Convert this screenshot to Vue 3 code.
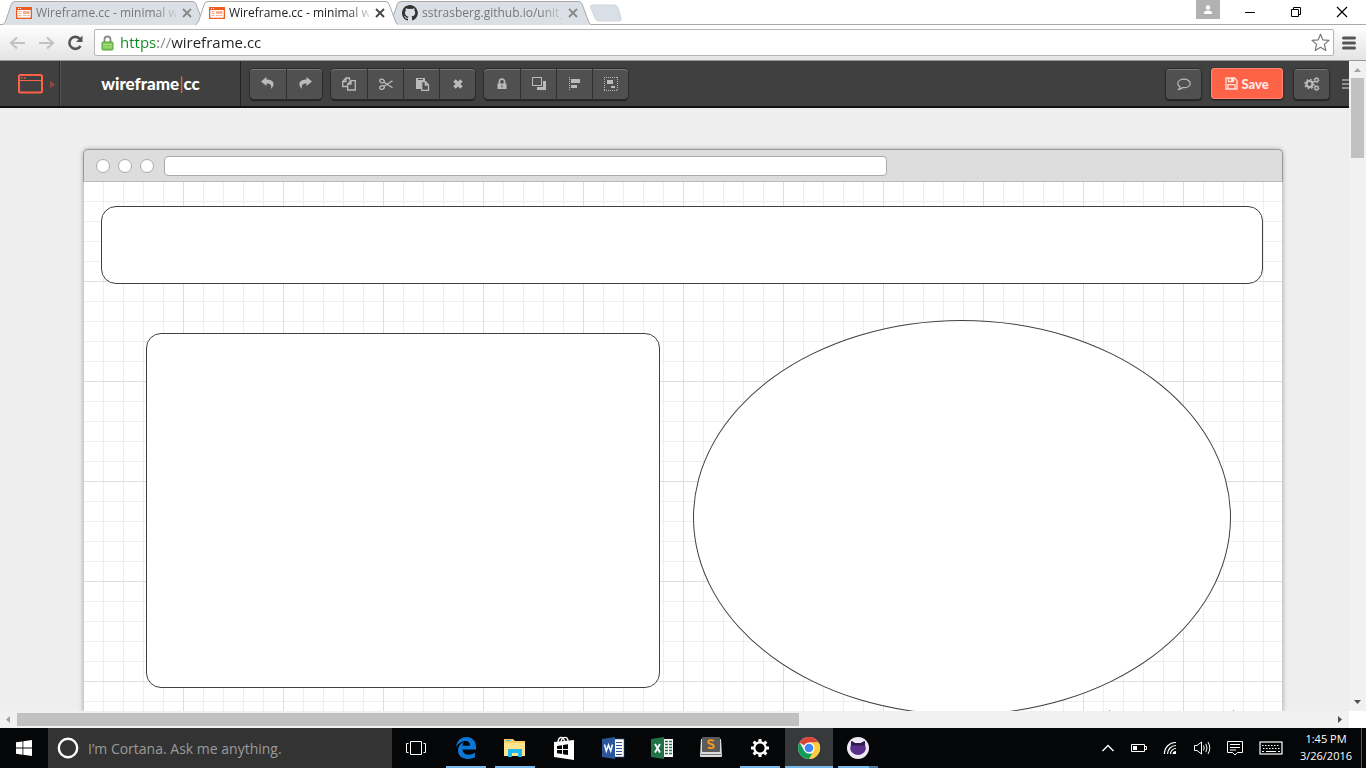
<script setup>
import { ref } from 'vue'

const url = ref('https://wireframe.cc')
const query = ref('')
const activeTab = ref(1)
const tabs = [
  { title: 'Wireframe.cc - minimal wi', icon: 'wire' },
  { title: 'Wireframe.cc - minimal wi', icon: 'wire' },
  { title: 'sstrasberg.github.io/unit_', icon: 'github' }
]
const toolGroups = [
  ['Undo', 'Redo'],
  ['Copy', 'Cut', 'Paste', 'Delete'],
  ['Lock', 'Order', 'Align', 'Group']
]
const apps = [
  { name: 'Edge', state: 'open' },
  { name: 'Explorer', state: 'open' },
  { name: 'Store', state: '' },
  { name: 'Word', state: '' },
  { name: 'Excel', state: '' },
  { name: 'Sublime', state: '' },
  { name: 'Settings', state: 'open' },
  { name: 'Chrome', state: 'open current' },
  { name: 'GitHub', state: 'open several' }
]
</script>

<template>
  <div class="desktop">
    <header class="chrome">
      <div class="strip">
        <div v-for="(t, i) in tabs" :key="i" class="tab" :class="{ active: i === activeTab }">
          <svg class="tab-shape" viewBox="0 0 203 25" preserveAspectRatio="none" aria-hidden="true">
            <path class="tab-fill" d="M0 25C2 24 3 23 4 20L9 5Q10 1 13 1H190Q193 1 194 4L200 20Q201 24 203 25Z" />
            <path class="tab-line" d="M0 24.5C2 24 3 23 4 20L9 5Q10 1.500 13 1.500H190Q193 1.500 194 4L200 20Q201 24 203 24.500" />
          </svg>
          <svg v-if="t.icon === 'wire'" class="favicon" viewBox="0 0 16 16" aria-hidden="true">
            <path fill="#f0591f" d="M0 2h16v12H0zM1.500 5v7.500h13V5z" fill-rule="evenodd" />
            <path fill="#fff" d="M1.500 5h13v7.500h-13zM2 3h1v1H2zM4 3h1v1H4z" />
            <path fill="#f9b08e" d="M2.500 6h3v1h-3zM2.500 8h3v1h-3zM2.500 10h3v1h-3zM7 6h6.500v3H7zM7 10h3v1H7zM11 10h2.500v1H11z" />
          </svg>
          <svg v-else class="favicon" viewBox="0 0 16 16" aria-hidden="true">
            <path fill="#333" d="M8 0C3.600 0 0 3.600 0 8c0 3.500 2.300 6.500 5.500 7.600.4.100.5-.2.500-.4v-1.500c-2.200.5-2.700-.9-2.700-.9-.4-1-.9-1.200-.9-1.200-.7-.5.100-.5.100-.5.800.1 1.200.8 1.200.8.700 1.200 1.900.9 2.400.7.100-.5.300-.9.500-1.100-1.800-.2-3.600-.9-3.600-4 0-.9.300-1.600.8-2.100-.1-.2-.4-1 .1-2.100 0 0 .7-.2 2.200.8a7.500 7.500 0 0 1 4 0c1.500-1 2.200-.8 2.200-.8.400 1.100.200 1.900.100 2.100.5.600.8 1.300.8 2.100 0 3.100-1.900 3.700-3.700 3.900.3.300.6.800.6 1.500v2.200c0 .2.100.5.500.4A8 8 0 0 0 8 0z" />
          </svg>
          <button class="tab-title" @click="activeTab = i">{{ t.title }}</button>
          <button class="tab-close" aria-label="Close tab">
            <svg width="10" height="10" viewBox="0 0 10 10"><path d="M1 1l8 8M9 1L1 9" stroke="currentColor" stroke-width="1.800" /></svg>
          </button>
        </div>
        <button class="new-tab" aria-label="New tab">
          <svg width="34" height="18" viewBox="0 0 34 18"><path d="M3 1H25Q28 1 29 4L32 14Q33 17 30 17H10Q7 17 6 14L2 4Q1 1 3 1Z" fill="#d9dfe6" stroke="#d0d4d9" /></svg>
        </button>
        <div class="window-controls">
          <button class="user" aria-label="User">
            <svg width="10" height="10" viewBox="0 0 10 10"><circle cx="5" cy="2.500" r="2.200" fill="#fff" /><path d="M1 9V8Q1 5.500 5 5.500T9 8V9Z" fill="#fff" /></svg>
          </button>
          <button class="control" aria-label="Minimise"><svg width="12" height="12" viewBox="0 0 12 12"><path d="M1 6.500H11" stroke="#000" /></svg></button>
          <button class="control" aria-label="Restore"><svg width="12" height="12" viewBox="0 0 12 12"><path d="M3.500 3V1.500H10.500V8.500H9M1.500 3.500H8.500V10.500H1.500Z" fill="none" stroke="#000" /></svg></button>
          <button class="control" aria-label="Close"><svg width="12" height="12" viewBox="0 0 12 12"><path d="M1 1L11 11M11 1L1 11" stroke="#000" stroke-width="1.200" /></svg></button>
        </div>
      </div>
      <div class="toolbar">
        <button class="nav" aria-label="Back"><svg width="17" height="14" viewBox="0 0 17 14"><path d="M8 1.500L2 7L8 12.500M2 7H16" fill="none" stroke="#c2c2c2" stroke-width="2.200" /></svg></button>
        <button class="nav" aria-label="Forward"><svg width="17" height="14" viewBox="0 0 17 14"><path d="M9 1.500L15 7L9 12.500M15 7H1" fill="none" stroke="#c2c2c2" stroke-width="2.200" /></svg></button>
        <button class="nav" aria-label="Reload"><svg width="17" height="16" viewBox="0 0 17 16"><path d="M13.500 11A6 6 0 1 1 13 4" fill="none" stroke="#555" stroke-width="2.600" /><path d="M15.500 0.500V7H9Z" fill="#555" /></svg></button>
        <div class="omnibox">
          <svg class="padlock" width="13" height="16" viewBox="0 0 13 16" aria-hidden="true"><path d="M3.500 7V4.500a3 3 0 0 1 6 0V7" fill="none" stroke="#8b8b8b" stroke-width="1.800" /><rect x="1" y="7" width="11" height="8" rx="1" fill="#83cc5b" stroke="#56a039" /><path d="M2 9.500h9M2 12h9" stroke="#a5e182" /></svg>
          <input v-model="url" class="url" type="text" aria-label="Address" spellcheck="false" />
          <button class="star" aria-label="Bookmark"><svg width="19" height="19" viewBox="0 0 19 19"><path d="M9.500 1.200L11.900 6.900L18 7.400L13.400 11.400L14.800 17.400L9.500 14.200L4.200 17.400L5.600 11.400L1 7.400L7.100 6.900Z" fill="#fff" stroke="#777" stroke-width="1.200" stroke-linejoin="round" /></svg></button>
        </div>
        <button class="menu" aria-label="Menu"><svg width="14" height="14" viewBox="0 0 14 14"><path d="M1.500 2H12.500M1.500 7H12.500M1.500 12H12.500" stroke="#555" stroke-width="3" stroke-linecap="round" /></svg></button>
      </div>
    </header>

    <div class="viewport">
      <main class="page">
        <div class="app-bar">
          <button class="device" aria-label="Choose device">
            <svg width="38" height="20" viewBox="0 0 38 20"><rect x="1" y="1" width="23" height="17.500" rx="1.500" fill="none" stroke="#ff6347" stroke-width="2" /><path d="M2 6.500H23" stroke="#ff6347" /><path d="M3 4h2M6 4h2" stroke="#ff6347" /><path d="M32 6.500L37 10.500L32 14.500Z" fill="#8b493e" /></svg>
          </button>
          <a class="brand" href="#">wireframe<span class="bar">|</span>cc</a>
          <div v-for="(g, gi) in toolGroups" :key="gi" class="group">
            <button v-for="name in g" :key="name" class="tool" :aria-label="name">
              <svg width="16" height="16" viewBox="0 0 16 16" fill="none" stroke="#bbb">
                <path v-if="name === 'Undo'" d="M6.500 1L1 5.500L6.500 10V7.500C10 7.500 11.800 8.500 11 13C16 8.500 13.500 3.500 6.500 3.500Z" fill="#bbb" stroke="none" />
                <path v-else-if="name === 'Redo'" d="M9.500 1L15 5.500L9.500 10V7.500C6 7.500 4.200 8.500 5 13C0 8.500 2.500 3.500 9.500 3.500Z" fill="#bbb" stroke="none" />
                <g v-else-if="name === 'Copy'" stroke-width="1.300"><path d="M6.500 10.500H1.700V5.500L5 2H8.500V4.500M5 2V5.500H1.700" /><path d="M10 4.700H14.300V14H6.700V8L10 4.700ZM10 4.700V8H6.700" /></g>
                <g v-else-if="name === 'Cut'" stroke-width="1.300"><ellipse cx="4" cy="5" rx="2.400" ry="1.700" transform="rotate(25 4 5)" /><ellipse cx="4" cy="11.500" rx="2.400" ry="1.700" transform="rotate(-25 4 11.500)" /><path d="M6 6.200L14.500 11.800M6 10.300L14.500 4.700" /></g>
                <g v-else-if="name === 'Paste'"><path d="M2 2H11V5H7V13H2Z" fill="#bbb" stroke="none" /><path d="M4 3.500H9" stroke="#505050" /><path d="M7.700 5.700H11.500L14.500 8.700V14.300H7.700ZM11.300 6V9H14.300" stroke-width="1.300" /></g>
                <path v-else-if="name === 'Delete'" d="M4.500 4.500L11.500 11.500M11.500 4.500L4.500 11.500" stroke-width="3.400" />
                <g v-else-if="name === 'Lock'"><path d="M5.500 8V5.500a2.500 2.500 0 0 1 5 0V8" stroke-width="1.700" /><path d="M3.500 7.500H12.500V13H3.500Z" fill="#bbb" stroke="none" /><path d="M8 9V11.500" stroke="#505050" /></g>
                <g v-else-if="name === 'Order'"><rect x="1.500" y="1.500" width="9" height="8" /><path d="M12 5H15V14H6V11H12Z" fill="#bbb" stroke="none" /></g>
                <g v-else-if="name === 'Align'"><path d="M2.500 1V15" stroke-dasharray="1 1" /><path d="M4 3H13V7H4ZM4 9H10V12H4Z" fill="#bbb" stroke="none" /></g>
                <g v-else><path d="M1 1.500H15M1 14.500H15M1.500 1V15M14.500 1V15" stroke-dasharray="1 1" /><path d="M4 4H10V8H4ZM8 10H12V12H8Z" fill="#bbb" stroke="none" /></g>
              </svg>
            </button>
          </div>
          <div class="actions">
            <button class="single" aria-label="Comments"><svg width="16" height="16" viewBox="0 0 16 16"><path d="M8 3.200c3.500 0 6.200 1.800 6.200 4.200S11.500 11.600 8 11.600l-1.300-.1Q5 13.300 2.700 13.500Q4 12.200 4 10.700Q1.800 9.500 1.800 7.400C1.800 5 4.500 3.200 8 3.200Z" fill="none" stroke="#bbb" stroke-width="1.200" /></svg></button>
            <button class="save"><svg width="13" height="13" viewBox="0 0 13 13" aria-hidden="true"><path d="M1 1H9.500L12 3.500V12H1ZM3 12V7.700H10V12M3.500 1V4.700H8.500V1" fill="none" stroke="#ffe4df" stroke-width="1.300" /><path d="M6 1H8V4H6Z" fill="#ffe4df" /></svg>Save</button>
            <button class="single" aria-label="Settings"><svg width="16" height="16" viewBox="0 0 16 16" fill="none" stroke="#bbb"><circle cx="5.500" cy="8" r="3" stroke-width="2.200" /><circle cx="5.500" cy="8" r="4.600" stroke-width="1.400" stroke-dasharray="1.800 1.800" /><circle cx="12.500" cy="4" r="1.700" stroke-width="1.300" /><circle cx="12.500" cy="4" r="2.600" stroke-dasharray="1 1" /><circle cx="12.500" cy="12" r="1.700" stroke-width="1.300" /><circle cx="12.500" cy="12" r="2.600" stroke-dasharray="1 1" /></svg></button>
            <button class="more" aria-label="More"><svg width="14" height="12" viewBox="0 0 14 12"><path d="M0 2H14M0 6H14M0 10H14" stroke="#aaa" stroke-width="1.500" /></svg></button>
          </div>
        </div>

        <div class="stage">
          <div class="mock">
            <div class="mock-bar">
              <i class="dot"></i><i class="dot"></i><i class="dot"></i>
              <div class="mock-url"></div>
            </div>
            <div class="grid">
              <div class="shape banner"></div>
              <div class="shape card"></div>
              <div class="shape oval"></div>
              <i class="tick first"></i>
              <i class="tick second"></i>
            </div>
          </div>
        </div>
      </main>
      <div class="scroll vertical">
        <svg width="17" height="17" viewBox="0 0 17 17"><path d="M5 11L8.500 7L12 11Z" fill="#a3a3a3" /></svg>
        <div class="track"><div class="thumb"></div></div>
        <svg width="17" height="17" viewBox="0 0 17 17"><path d="M5 6L8.500 10L12 6Z" fill="#505050" /></svg>
      </div>
      <div class="scroll horizontal">
        <svg width="17" height="17" viewBox="0 0 17 17"><path d="M10 5L6 8.500L10 12Z" fill="#a3a3a3" /></svg>
        <div class="track"><div class="thumb"></div></div>
        <svg width="17" height="17" viewBox="0 0 17 17"><path d="M6 5L10 8.500L6 12Z" fill="#505050" /></svg>
      </div>
    </div>

    <footer class="taskbar">
      <button class="start" aria-label="Start"><svg width="16" height="16" viewBox="0 0 16 16"><path d="M0 2.300L6.500 1.400V7.600H0ZM7.300 1.300L16 0V7.600H7.300ZM0 8.400H6.500V14.700L0 13.800ZM7.300 8.400H16V16L7.300 14.800Z" fill="#fff" /></svg></button>
      <div class="cortana">
        <svg width="22" height="22" viewBox="0 0 22 22" aria-hidden="true"><circle cx="11" cy="11" r="9.200" fill="none" stroke="#fff" stroke-width="2.400" /></svg>
        <input v-model="query" type="text" aria-label="Search" placeholder="I’m Cortana. Ask me anything." />
      </div>
      <button class="task-view" aria-label="Task view"><svg width="22" height="16" viewBox="0 0 22 16"><path d="M5.500 1.500H16.500V14.500H5.500ZM3.500 3.500H1.500V12.500H3.500M18.500 3.500H20.500V12.500H18.500" fill="none" stroke="#fff" /></svg></button>
      <button v-for="a in apps" :key="a.name" class="app" :class="a.state" :aria-label="a.name">
        <svg width="24" height="24" viewBox="0 0 24 24">
          <path v-if="a.name === 'Edge'" d="M2 11C3 4.500 7 1 12.500 1C18.500 1 22 5.500 22 10.500V13.500H8.500C8.700 17 11.500 18.700 14.500 18.700C17 18.700 19 18 21 16.800V21.300C19 22.500 16.500 23 14 23C7.500 23 4 19 4 14.500C4 10.500 6.500 7.500 10 6C8.900 7.300 8.600 8.500 8.500 9.800H16C16 7 14.500 5 11.500 5C7.500 5 4.200 7.500 2 11Z" fill="#0a78d7" />
          <g v-else-if="a.name === 'Explorer'"><path d="M1 3H10L12 5H22V20H1Z" fill="#f7cf62" /><path d="M1 7H22V20H1Z" fill="#ffe48e" /><path d="M3 4H8V5H3Z" fill="#35bff0" /><path d="M5 21V13H19V21H15V17H9V21Z" fill="#22b8ed" /></g>
          <g v-else-if="a.name === 'Store'"><path d="M6 7C6 1 11 -1 12.500 5M9 6C10 0 16 0 16 5" fill="none" stroke="#fff" stroke-width="1.400" /><path d="M2 6L22 4V24L2 21Z" fill="#fff" /><path d="M5 10L10 9.200V13H5ZM11 9L16 8.200V13H11ZM5 14H10V18L5 17.200ZM11 14H16V19L11 18.200Z" fill="#050505" /></g>
          <g v-else-if="a.name === 'Word'"><path d="M11 3H23V21H11Z" fill="#fff" stroke="#2b579a" stroke-width=".6" /><path d="M15 6.500H21M15 9.500H21M15 12.500H21M15 15.500H21M15 18.500H21" stroke="#2b579a" /><path d="M1 3L14 1V23L1 21Z" fill="#2b579a" /><path d="M3.500 8.500L5.300 15L7.500 9L9.700 15L11.500 8.500" fill="none" stroke="#fff" stroke-width="1.500" /></g>
          <g v-else-if="a.name === 'Excel'"><path d="M11 3H23V21H11Z" fill="#fff" /><path d="M15 5.500H22M15 8.500H22M15 11.500H22M15 14.500H22M15 17.500H22" stroke="#217346" stroke-width="1.700" /><path d="M18.500 4V20" stroke="#fff" /><path d="M1 3L14 1V23L1 21Z" fill="#217346" /><path d="M5 8L10 16.500M10 8L5 16.500" stroke="#fff" stroke-width="1.800" /></g>
          <g v-else-if="a.name === 'Sublime'"><path d="M2 3L1 20Q1 21 2 21H22Q23 21 23 20L22 3Z" fill="#dcdcdc" /><rect x="3" y="1" width="18" height="15" rx="1" fill="#5b5b5b" /><path d="M2 18.500H22" stroke="#777" /><path d="M15 5C12 3.500 9.200 4 9.200 6C9.200 8.500 14.800 7.500 14.800 10.200C14.800 12.500 11.500 12.500 9 11.500" fill="none" stroke="#f8981d" stroke-width="1.900" /></g>
          <g v-else-if="a.name === 'Settings'" fill="none" stroke="#fff"><circle cx="12" cy="12" r="5.700" stroke-width="2.200" /><path d="M12 3V6M12 18V21M3 12H6M18 12H21M5.600 5.600L7.800 7.800M16.200 16.200L18.400 18.400M18.400 5.600L16.200 7.800M7.800 16.200L5.600 18.400" stroke-width="3" /></g>
          <g v-else-if="a.name === 'Chrome'"><circle cx="12" cy="12" r="11" fill="#e7e7e7" /><path d="M12 12L2.500 6.500A11 11 0 0 1 21.500 6.500H12Z" fill="#db4437" /><path d="M12 6.500H21.600A11 11 0 0 1 12 23L16.800 14.800Z" fill="#ffcd40" /><path d="M2.500 6.500L7.200 14.800L12 17.500H15.200L12 23A11 11 0 0 1 2.500 6.500Z" fill="#0f9d58" /><circle cx="12" cy="12" r="5.500" fill="#fff" /><circle cx="12" cy="12" r="4.300" fill="#4285f4" /></g>
          <g v-else><circle cx="12" cy="12" r="11" fill="#eeeaf5" /><path d="M5.500 5L9 7H15L18.500 5Q19.500 7 19 9Q21 13 18 16.500Q15 19 12 19T6 16.500Q3 13 5 9Q4.500 7 5.500 5Z" fill="#5a2f8c" /><path d="M5.500 5L9 7H15L18.500 5Q19.500 7 19 9.500H5Q4.500 7 5.500 5Z" fill="#2d1d4c" /></g>
        </svg>
      </button>
      <div class="tray">
        <button aria-label="Show hidden icons"><svg width="14" height="10" viewBox="0 0 14 10"><path d="M1.500 8L7 2.500L12.500 8" fill="none" stroke="#fff" stroke-width="1.400" /></svg></button>
        <button aria-label="Battery"><svg width="16" height="10" viewBox="0 0 16 10"><path d="M.5 1.500H13.500V8.500H.5ZM14 3.500H15.500V6.500H14" fill="none" stroke="#fff" /><path d="M2 3H6V7H2Z" fill="#fff" /></svg></button>
        <button aria-label="Network"><svg width="14" height="14" viewBox="0 0 14 14"><path d="M1.500 13A11 11 0 0 1 13 1.500M4.500 13A8.500 8.500 0 0 1 13 4.500M7.500 13A5.500 5.500 0 0 1 13 7.500" fill="none" stroke="#fff" stroke-width="1.200" /><path d="M9.500 13A3.500 3.500 0 0 1 13 10V13Z" fill="#fff" /></svg></button>
        <button aria-label="Volume"><svg width="18" height="16" viewBox="0 0 18 16"><path d="M1.500 5.500H4L8.500 2V14L4 10.500H1.500ZM10.500 5.500Q12 8 10.500 10.500M12.800 3.800Q15.200 8 12.800 12.200M15 2Q18.500 8 15 14" fill="none" stroke="#fff" /></svg></button>
        <button aria-label="Notifications"><svg width="16" height="16" viewBox="0 0 16 16"><path d="M.5 1.500H15.500V12.500H10.500L8 15L5.500 12.500H.5ZM3 4.500H13M3 7.500H13M3 10H9" fill="none" stroke="#fff" /></svg></button>
        <button aria-label="Touch keyboard"><svg width="24" height="14" viewBox="0 0 24 14"><rect x="1" y="1" width="22" height="12" fill="none" stroke="#fff" stroke-width="1.200" /><path d="M3 4.500H21M4 7.500H21" stroke="#fff" stroke-width="1.200" stroke-dasharray="1.500 1.500" /><path d="M3 10.500H5M7 10.500H17M19 10.500H21" stroke="#fff" /></svg></button>
        <div class="clock"><time>1:45 PM</time><time>3/26/2016</time></div>
      </div>
    </footer>
  </div>
</template>

<style>
html, body { margin: 0; overflow: hidden; }
</style>

<style scoped>
* { box-sizing: border-box; }
button { border: 0; padding: 0; background: none; font: inherit; color: inherit; display: flex; align-items: center; justify-content: center; }
svg { display: block; flex: none; }
.desktop { height: 100vh; display: flex; flex-direction: column; font-family: "Open Sans", "Noto Sans", sans-serif; font-size: 12px; color: #222; background: #fff; }
.chrome { flex: none; }
.strip { display: flex; height: 25px; padding-left: 2px; background: linear-gradient(#fff 24px, #a9a9a9 24px); }
.tab { position: relative; display: flex; align-items: center; width: 203px; height: 25px; margin-right: -10px; padding-left: 14px; color: #777; }
.tab.active { z-index: 1; color: #222; }
.tab-shape { position: absolute; inset: 0; width: 100%; height: 100%; }
.tab-fill { fill: #dbe0e7; }
.tab-line { fill: none; stroke: #a9a9a9; }
.tab.active .tab-fill { fill: #fff; }
.favicon { position: relative; width: 16px; height: 16px; margin-right: 4px; }
.tab-title { position: relative; display: block; width: 140px; overflow: hidden; white-space: nowrap; text-align: left; line-height: 20px; -webkit-mask-image: linear-gradient(90deg, #000 118px, transparent 144px); mask-image: linear-gradient(90deg, #000 118px, transparent 144px); }
.tab-close { position: relative; margin-left: 6px; color: #888; }
.active .tab-close { color: #444; }
.new-tab { margin-left: 8px; width: 34px; height: 25px; }
.window-controls { display: flex; margin-left: auto; height: 24px; }
.user { width: 24px; height: 19px; background: #b1b1b1; margin-right: 7px; }
.control { width: 46px; height: 24px; }
.control:last-child { margin-right: 1px; }
.toolbar { display: flex; align-items: center; height: 36px; padding: 0 10px 0 9px; background: linear-gradient(#fff, #e4e4e4); border-bottom: 1px solid #999; }
.nav { width: 17px; height: 24px; margin-right: 12px; }
.nav + .nav + .nav { margin-right: 10px; }
.omnibox { flex: 1; display: flex; align-items: center; height: 27px; padding: 0 3px 0 6px; background: #fff; border: 1px solid #b5b5b5; border-radius: 2px; }
.url { flex: 1; min-width: 0; height: 22px; padding: 0 0 1px; margin-left: 6px; border: 0; outline: 0; font: 15px "Open Sans", "Noto Sans", sans-serif; color: #222; background: linear-gradient(90deg, #0b8a1e 38px, #888 38px, #888 52px, #222 52px); -webkit-background-clip: text; background-clip: text; -webkit-text-fill-color: transparent; }
.menu { width: 14px; margin-left: 8px; }
.viewport { flex: 1; min-height: 0; display: grid; grid-template: minmax(0, 1fr) 17px / minmax(0, 1fr) 17px; }
.page { display: flex; flex-direction: column; overflow: hidden; background: #eee; }
.app-bar { flex: none; display: flex; align-items: center; height: 47px; padding-bottom: 2px; overflow: hidden; background: linear-gradient(#404040 45px, #111 45px); }
.device { align-self: stretch; width: 60px; padding-left: 18px; border-right: 1px solid #262626; justify-content: flex-start; }
.brand { align-self: stretch; width: 181px; border-left: 1px solid #555; border-right: 1px solid #222; display: flex; align-items: center; justify-content: center; color: #fff; text-decoration: none; font: 900 17px Lato, sans-serif; }
.bar { color: #ff6347; font-weight: 400; }
.group { display: flex; height: 30px; margin-left: 9px; border-radius: 4px; background: #505050; box-shadow: inset 0 1px #777, 0 0 0 1px #2b2b2b, 0 2px 1px #222; }
.tool { width: 36px; }
.tool + .tool { border-left: 1px solid #303030; }
.actions { display: flex; align-items: center; margin-left: auto; margin-right: -7px; }
.single { width: 37px; height: 32px; border: 1px solid #2b2b2b; border-radius: 4px; background: #505050; box-shadow: inset 0 1px #777, 0 1px 1px #222; }
.save { width: 72px; height: 31px; margin: 0 10px 0 9px; gap: 3px; border-radius: 4px; background: #ff6347; color: #ffe9e5; font: 900 13px Lato, sans-serif; box-shadow: inset 0 0 0 1px #ff8672, 0 1px 2px #111; }
.more { width: 14px; margin-left: 12px; }
.stage { flex: 1; min-height: 0; display: flex; padding: 41px 66px 0 83px; }
.mock { flex: 1; min-width: 0; display: flex; flex-direction: column; border-radius: 5px 5px 0 0; box-shadow: 0 0 4px rgba(0, 0, 0, .3); }
.mock-bar { flex: none; display: flex; align-items: center; height: 33px; padding-left: 12px; background: #ddd; border: 1px solid #999; border-bottom-color: #bbb; border-radius: 5px 5px 0 0; }
.dot { width: 14px; height: 14px; margin-right: 8px; border: 1px solid #aaa; border-radius: 50%; background: #fff; }
.mock-url { width: 61%; height: 20px; margin-left: 2px; border: 1px solid #aaa; border-radius: 4px; background: #fff; }
.grid { position: relative; flex: 1; overflow: hidden; border-left: 1px solid #ccc; border-right: 1px solid #ccc; background-color: #fff; background-image: linear-gradient(90deg, #dedede 1px, transparent 1px), linear-gradient(#dedede 1px, transparent 1px), linear-gradient(90deg, #eee 1px, transparent 1px), linear-gradient(#eee 1px, transparent 1px); background-size: 100px 100px, 100px 100px, 20px 20px, 20px 20px; background-position: -1px -1px; }
.shape { position: absolute; background: #fff; border: 1px solid #404040; }
.banner { left: 17px; top: 24px; width: 1162px; height: 78px; border-radius: 15px; }
.card { left: 62px; top: 151px; width: 514px; height: 355px; border-radius: 15px; }
.oval { left: 609px; top: 138px; width: 538px; height: 395px; border-radius: 50%; }
.tick { position: absolute; top: 528px; width: 1px; height: 8px; background: #999; }
.first { left: 1025px; }
.second { left: 1149px; }
.scroll { display: flex; background: #f1f1f1; }
.vertical { flex-direction: column; }
.track { flex: 1; }
.thumb { background: #c1c1c1; }
.vertical .track { padding: 0 2px; }
.vertical .thumb { height: 13%; }
.horizontal .track { padding: 2px 0; }
.horizontal .thumb { width: 59.5%; height: 13px; }
.taskbar { flex: none; display: flex; height: 40px; background: #050607; color: #fff; }
.start { width: 48px; }
.cortana { display: flex; align-items: center; width: 344px; padding-left: 9px; background: #333; }
.cortana input { flex: 1; min-width: 0; margin-left: 9px; padding: 0; border: 0; outline: 0; background: none; color: #fff; font: 14px "Open Sans", "Noto Sans", sans-serif; }
.cortana input::placeholder { color: #9b9b9b; opacity: 1; }
.task-view { width: 48px; margin-right: 2px; }
.app { position: relative; width: 48px; margin-right: 1px; }
.app.open::after { content: ""; position: absolute; left: 4px; right: 4px; bottom: 0; height: 2px; background: #76b9ed; }
.app.current { background: #37393b; }
.app.current::after { left: 0; right: 0; }
.app.several::after { background: linear-gradient(90deg, #76b9ed 31px, #4f7da1 31px); }
.tray { display: flex; align-items: center; margin-left: auto; margin-right: 4px; padding-right: 5px; gap: 16px; border-right: 1px solid #555; }
.clock { display: flex; flex-direction: column; align-items: center; width: 60px; margin: 0 0 2px -3px; font-size: 11px; line-height: 17px; }
</style>
